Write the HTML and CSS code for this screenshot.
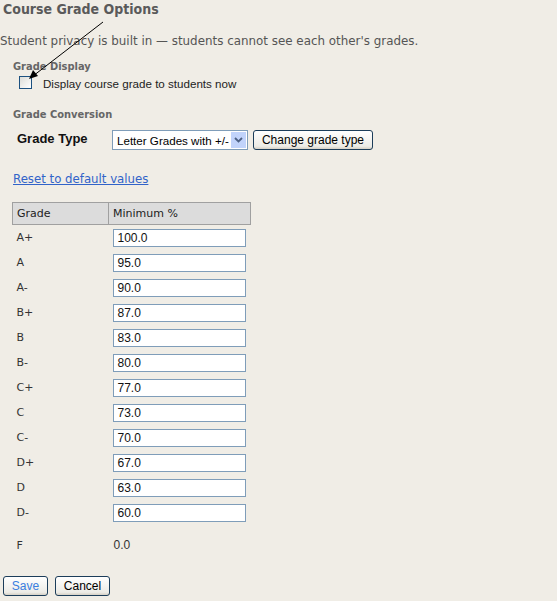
FILE: index.html
```html
<!DOCTYPE html>
<html>
<head>
<meta charset="utf-8">
<link rel="stylesheet" href="styles.css">
</head>
<body>
<div class="page">
  <h1 class="title">Course Grade Options</h1>
  <p class="privacy">Student privacy is built in — students cannot see each other's grades.</p>
  <h2 class="section">Grade Display</h2>
  <label class="check-row"><span class="checkbox"></span><span>Display course grade to students now</span></label>
  <h2 class="section conv">Grade Conversion</h2>
  <div class="type-row">
    <span class="type-label">Grade Type</span>
    <span class="select"><span class="select-text">Letter Grades with +/-</span><span class="select-btn"><svg width="9" height="6" viewBox="0 0 9 6"><path d="M1 1 L4.5 4.5 L8 1" fill="none" stroke="#4d6185" stroke-width="1.8"/></svg></span></span>
    <span class="btn">Change grade type</span>
  </div>
  <a class="reset" href="#">Reset to default values</a>
  <table class="grades">
    <thead><tr><th class="c1">Grade</th><th class="c2">Minimum %</th></tr></thead>
    <tbody>
      <tr><td>A+</td><td><span class="inp">100.0</span></td></tr>
      <tr><td>A</td><td><span class="inp">95.0</span></td></tr>
      <tr><td>A-</td><td><span class="inp">90.0</span></td></tr>
      <tr><td>B+</td><td><span class="inp">87.0</span></td></tr>
      <tr><td>B</td><td><span class="inp">83.0</span></td></tr>
      <tr><td>B-</td><td><span class="inp">80.0</span></td></tr>
      <tr><td>C+</td><td><span class="inp">77.0</span></td></tr>
      <tr><td>C</td><td><span class="inp">73.0</span></td></tr>
      <tr><td>C-</td><td><span class="inp">70.0</span></td></tr>
      <tr><td>D+</td><td><span class="inp">67.0</span></td></tr>
      <tr><td>D</td><td><span class="inp">63.0</span></td></tr>
      <tr><td>D-</td><td><span class="inp">60.0</span></td></tr>
      <tr class="last"><td>F</td><td><span class="plain">0.0</span></td></tr>
    </tbody>
  </table>
  <div class="actions">
    <span class="btn save">Save</span>
    <span class="btn">Cancel</span>
  </div>
  <svg class="arrow" width="120" height="90" viewBox="0 0 120 90">
    <line x1="103" y1="22" x2="33" y2="76" stroke="#000" stroke-width="1"/>
    <path d="M29 79 L33 70 L38 76 Z" fill="#000"/>
  </svg>
</div>
</body>
</html>
```
FILE: styles.css
```css
html, body { margin: 0; padding: 0; }
body { background: #f0ede6; width: 557px; height: 601px; overflow: hidden; }
.page { position: relative; padding: 0 0 0 3px; }
.title { margin: 0; padding-top: 1px; font: bold 14px "DejaVu Sans Condensed", "DejaVu Sans", sans-serif; color: #5a5a5a; height: 20px; line-height: 17px; }
.privacy { margin: 13px 0 0 -3px; font: 11.9px "DejaVu Sans", sans-serif; color: #555; line-height: 14px; }
.section { margin: 12px 0 0 10px; font: bold 11px "DejaVu Sans Condensed", "DejaVu Sans", sans-serif; color: #666; line-height: 13px; }
.check-row { display: flex; align-items: center; margin: 3px 0 0 16px; font: 11.6px "Liberation Sans", sans-serif; color: #222; height: 14px; }
.checkbox { width: 11px; height: 11px; border: 1px solid #1c5180; background: linear-gradient(135deg, #dcdcd7, #fff); margin-right: 11px; position: relative; top: -1px; }
.conv { margin-top: 18px; }
.type-row { display: flex; align-items: center; margin: 9px 0 0 14px; height: 20px; }
.type-label { font: bold 13px "Liberation Sans", sans-serif; color: #111; width: 95px; position: relative; top: -2px; }
.select { display: flex; align-items: center; width: 134px; height: 18px; border: 1px solid #7f9db9; background: #fff; font: 11.6px "Liberation Sans", sans-serif; color: #000; white-space: nowrap; overflow: hidden; }
.select-text { flex: 1; padding-left: 4px; }
.select-btn { width: 15px; height: 16px; margin-right: 1px; background: #c1d3fb; display: flex; align-items: center; justify-content: center; flex: none; }
.btn { display: inline-flex; align-items: center; justify-content: center; height: 17px; padding: 0 6px; border: 1px solid #1c3d5a; border-radius: 3px; background: linear-gradient(#fff, #ecebe6 85%, #d6d0c5); font: 12px "Liberation Sans", sans-serif; color: #000; white-space: nowrap; }
.type-row .btn { margin-left: 5px; width: 106px; height: 18px; padding: 0 6px; }
.reset { display: block; margin: 22px 0 0 10px; font: 11.75px "DejaVu Sans", sans-serif; color: #3163c9; text-decoration: underline; line-height: 14px; }
.grades { margin: 16px 0 0 9px; border-collapse: collapse; font: 11px "DejaVu Sans", sans-serif; color: #333; }
.grades th { background: #dcdcdc; border: 1px solid #a0a0a0; font-weight: normal; text-align: left; height: 21px; padding: 0 0 0 4px; color: #222; }
.grades th.c1 { width: 91px; }
.grades th.c2 { width: 137px; }
.grades td { height: 25px; padding: 0 0 0 4px; vertical-align: middle; }
.grades tr.last td { height: 40px; }
.inp { display: block; width: 127px; height: 16px; border: 1px solid #7f9db9; background: #fff; font: 12px "Liberation Sans", sans-serif; color: #111; line-height: 16px; padding-left: 4px; }
.plain { font: 12px "Liberation Sans", sans-serif; color: #333; padding-left: 1px; }
.actions { display: flex; gap: 7px; margin-top: 11px; }
.actions .btn { height: 18px; }
.save { width: 31px; color: #3a7ee0; }
.actions .btn:last-child { width: 41px; }
.arrow { position: absolute; left: 0; top: 0; }
```
